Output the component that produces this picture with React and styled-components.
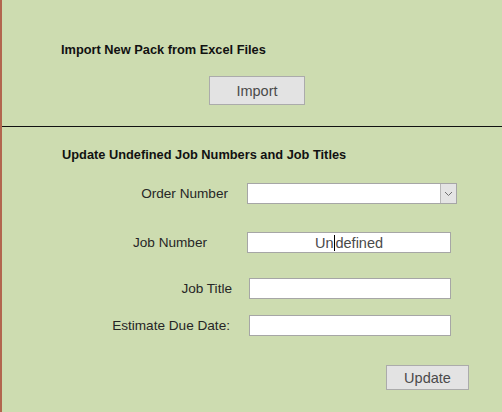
import styled, { createGlobalStyle } from "styled-components";

const GlobalStyle = createGlobalStyle`
  html, body {
    margin: 0;
    padding: 0;
    background: #cddcb0;
  }
  body {
    font-family: "Liberation Sans", Arial, sans-serif;
  }
`;

const Page = styled.div`
  width: 500px;
  height: 412px;
  background: #cddcb0;
  border-left: 2px solid #b2664e;
  display: flex;
  flex-direction: column;
  overflow: hidden;
`;

const Section = styled.section`
  display: flex;
  flex-direction: column;
  height: ${(p) => p.$height}px;
  padding-top: ${(p) => p.$top}px;
  box-sizing: border-box;
`;

const Title = styled.h2`
  margin: 0 0 0 ${(p) => p.$left}px;
  font-size: 12.8px;
  font-weight: 700;
  line-height: 16px;
  color: #111;
`;

const Divider = styled.hr`
  margin: 0;
  border: 0;
  border-top: 1px solid #111;
  height: 0;
`;

const Button = styled.button`
  align-self: ${(p) => (p.$right ? "flex-end" : "flex-start")};
  margin: ${(p) => p.$margin};
  width: ${(p) => p.$width}px;
  height: ${(p) => p.$height}px;
  background: #e3e3e3;
  border: 1px solid #ababab;
  color: #4a4a4a;
  font-family: "Liberation Sans", Arial, sans-serif;
  font-size: 14.5px;
  padding: 0;
`;

const Row = styled.div`
  display: flex;
  align-items: center;
  height: 21px;
  margin-top: ${(p) => p.$top}px;
`;

const Label = styled.label`
  width: ${(p) => p.$inset}px;
  padding-right: ${(p) => p.$gap}px;
  box-sizing: border-box;
  text-align: right;
  font-size: 13.6px;
  color: #262626;
  white-space: nowrap;
`;

const Field = styled.div`
  width: ${(p) => p.$width}px;
  height: 21px;
  box-sizing: border-box;
  background: #fff;
  border: 1px solid #a6a6a6;
  display: flex;
  align-items: center;
  justify-content: center;
  font-size: 14.5px;
  color: #4a4a4a;
`;

const Combo = styled(Field)`
  justify-content: flex-end;
`;

const DropButton = styled.div`
  width: 16px;
  height: 19px;
  box-sizing: border-box;
  background: #e4e4e4;
  border-left: 1px solid #b8b8b8;
  display: flex;
  align-items: center;
  justify-content: center;
`;

const Caret = styled.span`
  display: inline-block;
  width: 1px;
  height: 16px;
  background: #000;
  margin: 0 0.5px;
`;

export default function App() {
  return (
    <Page>
      <GlobalStyle />
      <Section $height={126} $top={42}>
        <Title $left={59}>Import New Pack from Excel Files</Title>
        <Button $margin="18px 0 0 207px" $width={96} $height={29}>
          Import
        </Button>
      </Section>
      <Divider />
      <Section $height={285} $top={20}>
        <Title $left={60}>Update Undefined Job Numbers and Job Titles</Title>
        <Row $top={20}>
          <Label $inset={245} $gap={19}>Order Number</Label>
          <Combo $width={210}>
            <DropButton>
              <svg width="9" height="6" viewBox="0 0 9 6">
                <path d="M1 1 L4.5 4.5 L8 1" fill="none" stroke="#707070" strokeWidth="1" />
              </svg>
            </DropButton>
          </Combo>
        </Row>
        <Row $top={28}>
          <Label $inset={245} $gap={40}>Job Number</Label>
          <Field $width={204}>
            Un<Caret />defined
          </Field>
        </Row>
        <Row $top={25}>
          <Label $inset={247} $gap={17}>Job Title</Label>
          <Field $width={202} />
        </Row>
        <Row $top={16}>
          <Label $inset={247} $gap={19}>Estimate Due Date:</Label>
          <Field $width={202} />
        </Row>
        <Button $right $margin="29px 33px 0 0" $width={83} $height={25}>
          Update
        </Button>
      </Section>
    </Page>
  );
}
